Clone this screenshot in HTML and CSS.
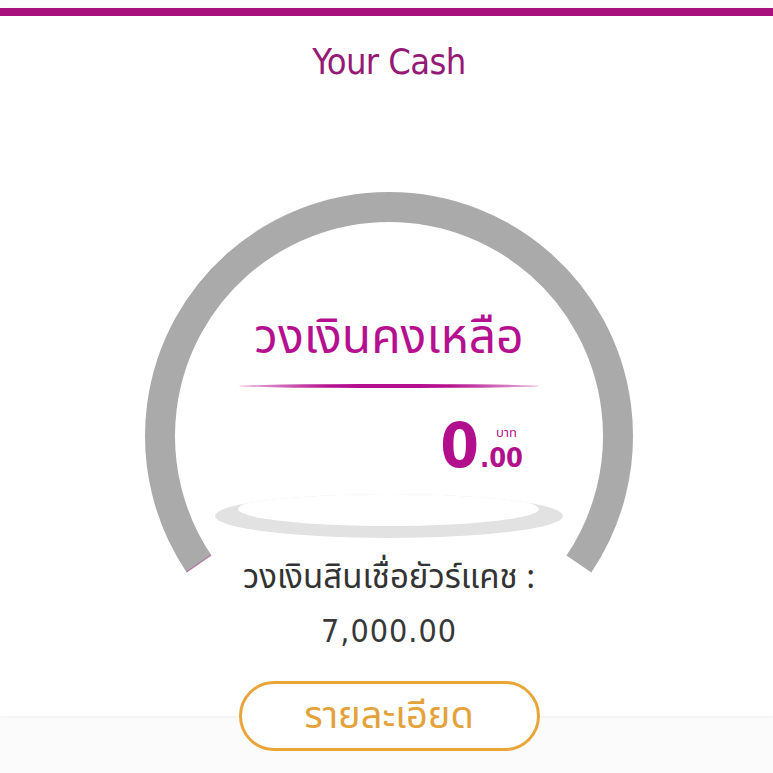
FILE: index.html
```html
<!DOCTYPE html>
<html lang="th">
<head>
<meta charset="utf-8">
<link rel="stylesheet" href="styles.css">
</head>
<body>
<div class="page">
  <section class="card">
    <h1 class="title">Your Cash</h1>
    <div class="gauge">
      <svg class="ring" viewBox="0 0 490 390" width="490" height="390">
        <path d="M55.1 374 A229 229 0 1 1 434.9 374" fill="none" stroke="#aaaaaa" stroke-width="30"/>
        <path d="M55.1 374 A229 229 0 0 1 54.4 373" fill="none" stroke="#c04aa0" stroke-width="30" opacity="0.5"/>
      </svg>
      <div class="gauge-content">
        <div class="remain-label">วงเงินคงเหลือ</div>
        <div class="divider"></div>
        <div class="amount-row">
          <span class="amount-int">0</span>
          <span class="amount-side">
            <span class="unit">บาท</span>
            <span class="amount-dec">.00</span>
          </span>
        </div>
        <div class="base"><div class="base-inner"></div></div>
      </div>
    </div>
    <div class="credit-label">วงเงินสินเชื่อยัวร์แคช :</div>
    <div class="credit-value">7,000.00</div>
  </section>
  <button class="detail-btn">รายละเอียด</button>
</div>
</body>
</html>
```

FILE: styles.css
```css
html, body {
  margin: 0;
  padding: 0;
}
body {
  background: #fbfbfb;
  font-family: "Noto Sans Thai", "Noto Sans", "DejaVu Sans", sans-serif;
}
.page {
  padding-top: 8px;
  display: flex;
  flex-direction: column;
  align-items: center;
}
.card {
  box-sizing: border-box;
  width: 100%;
  height: 708px;
  padding-left: 5px;
  background: #ffffff;
  border-top: 8px solid #a8107d;
  box-shadow: 0 1px 3px rgba(0, 0, 0, 0.05);
  display: flex;
  flex-direction: column;
  align-items: center;
}
.title {
  margin: 0;
  padding-top: 25px;
  font-family: "DejaVu Sans Condensed", "DejaVu Sans", sans-serif;
  font-weight: normal;
  font-size: 36px;
  line-height: 42px;
  letter-spacing: -0.6px;
  color: #941a76;
}
.gauge {
  position: relative;
  width: 490px;
  height: 355px;
  margin-top: 107px;
}
.ring {
  position: absolute;
  left: 0;
  top: 0;
  overflow: visible;
}
.gauge-content {
  position: relative;
  display: flex;
  flex-direction: column;
  align-items: center;
  padding-top: 119px;
}
.remain-label {
  font-size: 48px;
  line-height: 60px;
  color: #b5108f;
}
.divider {
  width: 300px;
  height: 4px;
  margin-top: 15px;
  border-radius: 50%;
  background: linear-gradient(90deg, rgba(181,16,143,0.3), #b5108f 30%, #b5108f 70%, rgba(181,16,143,0.3));
}
.amount-row {
  width: 300px;
  height: 50px;
  box-sizing: border-box;
  padding-right: 16px;
  margin-top: 33px;
  display: flex;
  justify-content: flex-end;
  align-items: flex-end;
}
.amount-int {
  font-family: "DejaVu Sans Condensed", "DejaVu Sans", sans-serif;
  font-weight: bold;
  font-size: 62px;
  line-height: 50px;
  color: #b10f8c;
}
.amount-side {
  display: flex;
  flex-direction: column;
  align-items: flex-end;
  margin-left: 1px;
  margin-bottom: -3px;
}
.unit {
  font-size: 13px;
  line-height: 18px;
  padding-right: 6px;
  color: #b10f8c;
}
.amount-dec {
  font-family: "DejaVu Sans Condensed", "DejaVu Sans", sans-serif;
  font-weight: bold;
  font-size: 27px;
  line-height: 32px;
  color: #b10f8c;
}
.base {
  position: relative;
  width: 348px;
  height: 44px;
  margin-top: 23px;
  border-radius: 50%;
  background: #e2e2e2;
  overflow: hidden;
}
.base-inner {
  position: absolute;
  left: 23px;
  right: 24px;
  top: -2px;
  bottom: 12px;
  border-radius: 50%;
  background: #ffffff;
}
.credit-label {
  margin-top: 12px;
  font-size: 33px;
  line-height: 42px;
  color: #333333;
}
.credit-value {
  margin-top: 12px;
  font-family: "DejaVu Sans Condensed", "DejaVu Sans", sans-serif;
  font-size: 32px;
  line-height: 40px;
  letter-spacing: 1px;
  color: #383838;
}
.detail-btn {
  margin-top: -35px;
  margin-left: 5px;
  box-sizing: border-box;
  width: 301px;
  height: 70px;
  border: 3px solid #e8a53a;
  border-radius: 35px;
  background: #ffffff;
  font-family: "Noto Sans Thai", "Noto Sans", sans-serif;
  font-size: 38px;
  color: #e3a23a;
  padding: 0;
}
```
